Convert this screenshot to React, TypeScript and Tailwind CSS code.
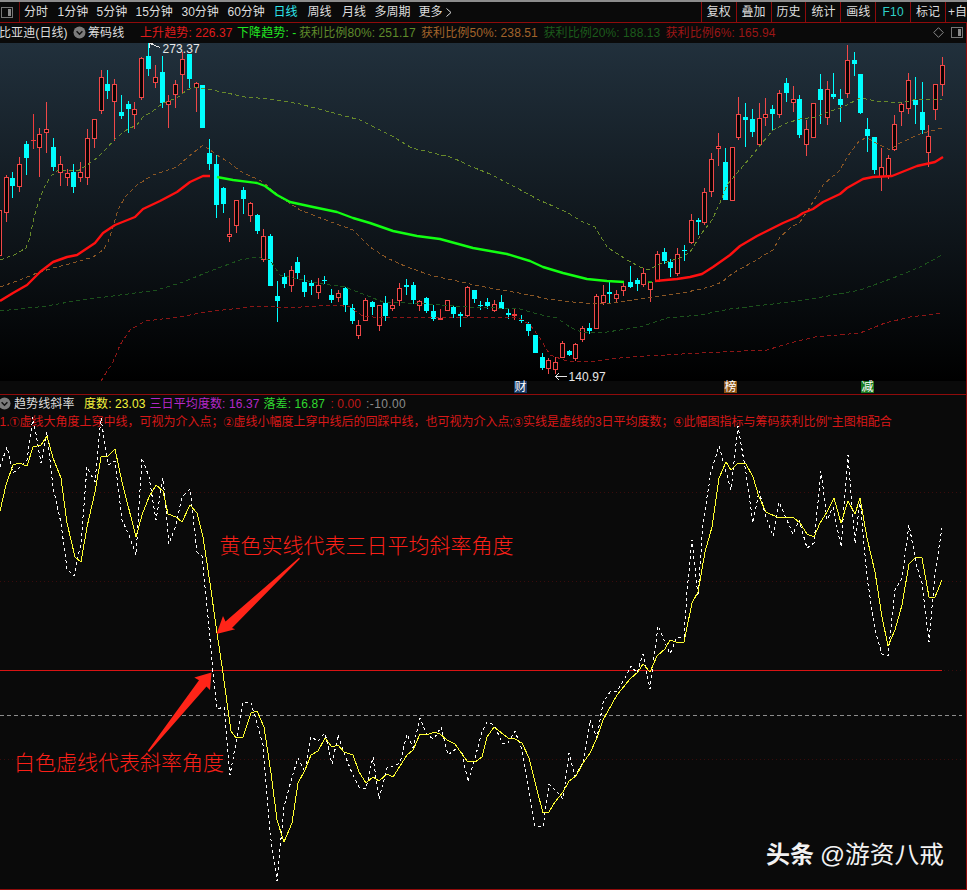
import React from "react";

type Candle = [number, number, number, number, "r" | "c" | "R"];

// [high, bodyTop, bodyBottom, low, kind]; r = hollow rise, R = solid red, c = fall
const candles: Candle[] = [
  [210, 210, 255, 255, "r"], [175, 177, 212, 221, "r"], [172, 178, 185, 197, "c"], [157, 164, 186, 191, "r"],
  [141, 144, 157, 174, "c"], [114, 140, 140, 148, "R"], [128, 134, 147, 176, "r"], [102, 129, 132, 152, "r"],
  [138, 147, 166, 170, "c"], [156, 164, 172, 185, "r"], [169, 173, 177, 185, "r"], [164, 172, 186, 192, "c"],
  [162, 172, 177, 181, "r"], [129, 138, 177, 184, "r"], [119, 119, 138, 147, "r"], [70, 77, 110, 113, "r"],
  [70, 84, 90, 98, "c"], [79, 84, 101, 140, "r"], [95, 112, 115, 118, "c"], [101, 104, 108, 132, "c"],
  [102, 109, 114, 128, "r"], [57, 58, 97, 99, "r"], [43, 56, 68, 75, "c"], [65, 77, 82, 87, "r"],
  [56, 72, 102, 107, "c"], [95, 101, 104, 127, "r"], [80, 84, 94, 107, "r"], [52, 59, 74, 93, "r"],
  [54, 54, 78, 87, "c"], [82, 83, 87, 111, "r"], [85, 85, 127, 127, "c"], [139, 153, 163, 169, "c"],
  [155, 164, 204, 217, "c"], [187, 188, 203, 212, "c"], [218, 234, 236, 241, "r"], [200, 200, 225, 232, "r"],
  [187, 190, 198, 213, "c"], [202, 203, 215, 221, "r"], [214, 215, 230, 233, "c"], [229, 236, 259, 261, "r"],
  [234, 236, 285, 285, "c"], [281, 296, 300, 321, "c"], [273, 277, 283, 287, "c"], [266, 270, 285, 291, "r"],
  [257, 262, 272, 278, "c"], [275, 282, 291, 296, "c"], [280, 283, 285, 294, "c"], [278, 285, 292, 298, "r"],
  [276, 280, 280, 283, "c"], [289, 295, 299, 302, "c"], [290, 293, 297, 301, "r"], [287, 288, 304, 311, "c"],
  [304, 308, 320, 323, "c"], [320, 325, 335, 338, "r"], [298, 300, 320, 320, "r"], [301, 302, 306, 314, "c"],
  [305, 305, 325, 330, "r"], [296, 303, 315, 320, "c"], [299, 305, 308, 310, "r"], [283, 288, 300, 305, "r"],
  [279, 285, 286, 294, "c"], [282, 285, 299, 303, "c"], [300, 301, 305, 310, "r"], [297, 298, 310, 312, "c"],
  [305, 311, 318, 320, "c"], [309, 318, 319, 319, "R"], [300, 300, 310, 310, "r"], [306, 307, 313, 317, "c"],
  [312, 314, 315, 326, "c"], [286, 287, 315, 316, "r"], [290, 290, 298, 302, "c"], [301, 305, 305, 309, "c"],
  [298, 302, 305, 308, "c"], [300, 304, 310, 311, "r"], [295, 302, 308, 308, "c"], [309, 313, 314, 318, "c"],
  [309, 314, 315, 319, "R"], [315, 320, 320, 322, "c"], [322, 324, 330, 335, "c"], [335, 335, 352, 352, "c"],
  [353, 357, 367, 369, "c"], [358, 360, 368, 373, "r"], [357, 362, 369, 373, "r"], [341, 343, 357, 357, "r"],
  [350, 351, 354, 355, "c"], [343, 344, 358, 360, "r"], [326, 328, 339, 341, "r"], [323, 328, 330, 333, "c"],
  [294, 296, 328, 328, "r"], [285, 295, 302, 304, "r"], [281, 292, 293, 302, "c"], [290, 294, 298, 301, "r"],
  [282, 286, 290, 295, "r"], [266, 282, 286, 287, "c"], [278, 280, 283, 290, "c"], [268, 273, 284, 286, "r"],
  [282, 282, 289, 301, "r"], [251, 254, 281, 281, "r"], [248, 252, 260, 263, "c"], [259, 262, 267, 276, "c"],
  [248, 254, 273, 275, "r"], [245, 250, 250, 260, "c"], [214, 220, 242, 243, "r"], [218, 220, 221, 234, "c"],
  [188, 192, 222, 224, "r"], [153, 159, 191, 196, "r"], [133, 146, 148, 165, "r"], [148, 162, 199, 199, "c"],
  [147, 147, 200, 200, "r"], [97, 114, 137, 139, "r"], [103, 117, 119, 146, "c"], [109, 119, 131, 136, "c"],
  [103, 118, 144, 146, "r"], [98, 114, 117, 125, "r"], [105, 109, 113, 130, "c"], [90, 93, 114, 117, "r"],
  [78, 83, 92, 101, "c"], [86, 99, 102, 111, "r"], [95, 99, 134, 137, "c"], [120, 129, 144, 155, "r"],
  [103, 103, 137, 137, "r"], [74, 89, 99, 123, "c"], [81, 89, 117, 124, "r"], [73, 94, 96, 98, "c"],
  [89, 99, 104, 121, "c"], [45, 60, 93, 97, "r"], [52, 60, 63, 75, "c"], [74, 74, 112, 113, "c"],
  [118, 129, 135, 151, "c"], [137, 137, 169, 173, "c"], [148, 167, 176, 190, "r"], [155, 158, 176, 178, "r"],
  [115, 124, 149, 150, "r"], [103, 104, 111, 125, "r"], [73, 80, 108, 113, "r"], [77, 100, 104, 123, "c"],
  [82, 112, 129, 133, "c"], [125, 136, 152, 166, "r"], [84, 84, 109, 119, "r"], [57, 65, 84, 95, "r"],
];

const profit80 =
  "0,260 14,255 26,248 30,237 33,222 37,207 43,190 50,177 58,170 67,170 78,171 87,165 97,158 107,148 117,137 128,129 137,125 143,117 153,111 163,103 177,98 187,90 195,87 207,89 227,93 245,97 270,99 300,104 330,112 360,120 390,135 412,148 433,153 450,157 460,161 470,166 490,174 515,187 539,200 555,207 568,213 583,222 595,227 607,247 627,260 640,267 648,270 660,264 680,258 690,252 702,233 712,220 720,203 727,185 737,173 750,158 762,143 773,130 787,123 800,119 817,117 828,112 843,107 860,98 877,101 900,103 913,100 942,99";
const profit50 =
  "0,287 20,280 37,273 53,268 73,263 93,257 103,250 108,242 112,230 118,210 125,197 137,185 153,175 177,167 188,157 203,145 217,155 230,163 240,171 263,182 280,197 300,210 323,219 353,230 370,247 387,258 407,267 433,276 453,280 470,284 490,288 530,295 547,299 573,302 593,304 613,303 647,298 673,294 687,292 710,287 722,282 733,273 753,262 773,250 780,237 790,228 800,222 810,207 823,185 840,170 847,157 860,140 867,138 880,145 890,150 900,143 920,134 942,128";
const profit20 =
  "0,311 47,306 80,300 113,296 157,290 183,282 213,270 240,260 257,257 270,260 280,275 293,278 323,284 345,287 363,294 383,302 427,304 470,307 520,309 537,314 557,318 570,327 583,333 607,332 640,327 667,318 700,315 730,309 773,304 817,298 860,290 893,278 920,267 942,255";
const profit6 =
  "101,381 113,362 120,345 130,330 145,321 180,317 205,312 250,307 270,306 283,308 337,305 350,307 358,313 363,316 373,317 420,317 470,318 517,317 530,325 540,338 550,355 567,361 590,362 620,358 647,356 700,353 767,350 790,343 815,337 860,333 885,323 910,317 942,313";
const trendUpA =
  "0,301 13,293 27,285 40,272 53,262 67,257 77,255 95,243 103,233 115,225 135,217 143,209 160,201 177,192 190,182 203,176 210,176";
const trendDown =
  "217,177 233,180 257,183 265,186 277,195 290,202 313,207 337,212 353,218 370,223 393,231 417,236 440,239 473,248 507,254 530,261 543,267 563,273 587,279 607,281 624,282";
const trendUpB =
  "655,281 677,279 690,277 702,274 713,267 730,255 740,246 757,236 773,228 783,223 797,217 803,213 813,209 823,202 840,194 847,188 863,179 873,177 892,176 907,170 917,166 935,162 943,157";

const average =
  "0,511 6,485 13,465 19,463 27,466 33,447 41,445 47,436 53,458 61,478 67,523 75,557 81,562 87,527 95,492 101,457 108,456 115,449 122,482 136,537 142,515 149,497 156,485 163,491 168,514 176,517 182,522 190,505 197,513 203,537 210,583 217,633 223,673 228,710 231,731 236,738 243,737 251,713 257,711 264,727 271,773 277,820 284,842 292,823 298,783 305,770 311,755 318,751 325,738 332,747 338,745 344,752 353,755 359,772 366,783 373,777 379,781 387,774 393,777 407,755 413,750 420,734 427,735 434,732 440,734 447,740 455,744 467,761 475,762 482,757 487,737 494,727 508,738 515,739 522,743 529,758 537,790 543,813 549,812 555,802 563,792 569,781 576,776 583,763 590,753 597,738 603,720 617,695 630,679 638,672 643,664 650,672 657,656 665,649 670,640 679,643 684,642 692,603 698,592 705,552 712,527 719,478 726,462 731,470 738,463 746,464 753,477 759,497 766,512 779,518 787,517 793,517 800,523 807,534 814,537 820,523 827,512 834,498 841,523 848,501 855,514 860,498 867,538 875,572 882,617 888,646 895,630 902,605 909,564 916,557 922,558 929,597 935,597 942,580";
const degree =
  "0,467 7,447 13,473 19,468 27,460 33,417 41,463 47,432 53,487 61,523 67,569 74,576 81,543 87,467 95,482 101,418 108,465 115,461 122,520 129,535 136,555 142,458 149,477 156,520 163,478 169,544 176,525 182,497 190,489 197,552 202,556 208,617 213,673 217,709 224,707 230,775 237,737 243,702 251,703 257,723 263,745 270,833 277,881 284,807 292,777 298,758 305,772 311,737 318,741 325,733 332,764 338,735 344,753 352,773 359,787 366,789 373,757 379,799 387,768 393,766 400,763 407,734 413,748 420,718 427,735 434,739 441,727 448,755 457,748 462,753 468,782 475,758 482,732 487,722 494,725 503,744 508,743 515,731 522,750 528,787 535,826 543,827 549,784 557,792 563,799 569,753 575,776 583,763 590,720 597,738 603,703 610,692 617,691 625,678 631,666 637,673 643,654 650,689 658,626 670,654 677,637 684,637 687,592 692,540 698,596 703,523 711,472 719,446 731,490 738,426 746,473 753,523 759,491 766,517 773,536 779,502 793,534 799,520 807,548 814,543 821,471 827,520 833,507 841,547 848,455 855,543 860,500 867,577 875,630 882,654 888,656 895,590 902,578 909,525 917,567 922,583 929,642 935,573 942,528";

const periods: [string, string][] = [
  ["分时", "w-[33.5px]"],
  ["1分钟", "w-[39px]"],
  ["5分钟", "w-[39px]"],
  ["15分钟", "w-[46px]"],
  ["30分钟", "w-[46px]"],
  ["60分钟", "w-[46px]"],
  ["日线", "w-[34px] text-[#2ee6ea]"],
  ["周线", "w-[34.5px]"],
  ["月线", "w-[32.5px]"],
  ["多周期", "w-[44px]"],
  ["更多", "w-[27px]"],
];

const tools = ["复权", "叠加", "历史", "统计", "画线", "F10", "标记"];

function PanelIcon({ className }: { className: string }) {
  return (
    <svg className={className} width="13" height="11" viewBox="0 0 13 11" fill="none" shapeRendering="crispEdges">
      <rect x="0.5" y="0.5" width="11" height="10" rx="1" stroke="#777" />
      <rect x="7" y="2" width="3" height="7" fill="#8a8a8a" />
    </svg>
  );
}

function CollapseDot({ className }: { className: string }) {
  return (
    <svg className={className} width="13" height="13" viewBox="0 0 13 13">
      <circle cx="6.5" cy="6.5" r="6" fill="#7c7c7c" />
      <path d="M3.6 5.2 6.5 8.2 9.4 5.2" fill="none" stroke="#111" strokeWidth="1.5" />
    </svg>
  );
}

function Toolbar() {
  return (
    <div className="flex h-[23px] shrink-0 items-center border-t-2 border-b border-t-[#8c8c8c] border-b-[#8f0b0b] text-[#dedede]">
      <div className="flex h-full w-[20px] shrink-0 items-center border-r border-[#6e0909]">
        <PanelIcon className="ml-px" />
      </div>
      <div className="flex pl-[4px]">
        {periods.map(([label, cls]) => (
          <span key={label} className={"shrink-0 " + cls}>{label}</span>
        ))}
      </div>
      <svg width="6" height="9" viewBox="0 0 6 9" fill="none" stroke="#ddd">
        <path d="M.5.5 5 4.5.5 8.5" />
      </svg>
      <div className="ml-auto flex h-full shrink-0">
        {tools.map((t) => (
          <span
            key={t}
            className={
              "flex w-[34.9px] shrink-0 items-center justify-center border-l border-[#8f0b0b] " +
              (t === "F10" ? "text-[#2ed0c8] tracking-wide" : "")
            }
          >
            {t}
          </span>
        ))}
        <span className="flex w-[22px] items-center border-l border-[#8f0b0b] pl-[2px]">+自</span>
      </div>
    </div>
  );
}

function CandleShape({ index, candle }: { index: number; candle: Candle }) {
  const [high, top, bottom, low, kind] = candle;
  const x = Math.max(Math.floor(6.785 * index - 0.75), -1);
  const h = bottom - top + 1;
  if (kind === "r") {
    return (
      <g>
        {top > high && <rect x={x} y={high} width="1" height={top - high} fill="#f04848" />}
        {low > bottom && <rect x={x} y={bottom + 1} width="1" height={low - bottom} fill="#f04848" />}
        <rect x={x - 2} y={top} width="5" height={h} fill="#f04848" />
        <rect x={x - 1} y={top + 1} width="3" height={Math.max(h - 2, 1)} fill="#0b0202" />
      </g>
    );
  }
  const color = kind === "R" ? "#f03c3c" : "#00ffff";
  return (
    <g fill={color}>
      <rect x={x} y={high} width="1" height={low - high + 1} />
      <rect x={x - 2} y={top} width="5" height={h} />
    </g>
  );
}

function PriceChart() {
  return (
    <svg className="block shrink-0 overflow-visible" width="966" height="338" viewBox="0 43 966 338">
      <defs>
        <linearGradient id="sky" x1="0" y1="0" x2="0" y2="1">
          <stop offset="0" stopColor="#21303c" />
          <stop offset="1" stopColor="#000000" />
        </linearGradient>
      </defs>
      <rect x="0" y="43" width="966" height="338" fill="url(#sky)" />
      <g shapeRendering="crispEdges">
        {candles.map((c, i) => (
          <CandleShape key={i} index={i} candle={c} />
        ))}
      </g>
      <g fill="none" strokeWidth="1" strokeDasharray="4 3" shapeRendering="crispEdges">
        <polyline points={profit6} stroke="#8c1616" />
        <polyline points={profit20} stroke="#1c521c" />
        <polyline points={profit50} stroke="#8a5624" />
        <polyline points={profit80} stroke="#688a2a" />
      </g>
      <g fill="none" strokeWidth="2.4" strokeLinejoin="round">
        <polyline points={trendUpA} stroke="#ff1010" />
        <polyline points={trendDown} stroke="#12ff12" />
        <path d="M648 282H652" stroke="#12d012" strokeWidth="1.5" />
        <polyline points={trendUpB} stroke="#ff1010" />
      </g>
      <g fill="none" stroke="#e4e4e4" shapeRendering="crispEdges">
        <path d="M149 48V43.5H153M150 43.5 160 47.5" />
        <path d="M555 376.5H567M559 373 555.5 376.5 559 380" />
      </g>
      <g fill="#e8e8e8" fontSize="12" letterSpacing="0.1">
        <text x="162.5" y="53">273.37</text>
        <text x="568.5" y="381">140.97</text>
      </g>
    </svg>
  );
}

function Marker({ label, className }: { label: string; className: string }) {
  return (
    <span className={"flex h-[12px] w-[13px] shrink-0 items-center justify-center leading-[12px] text-white " + className}>
      {label}
    </span>
  );
}

function Circled({ children }: { children: React.ReactNode }) {
  return <span className="inline-block w-[10px] text-[10px] leading-none font-bold">{children}</span>;
}

function SlopeChart() {
  return (
    <div className="relative h-[477px] shrink-0">
      <div className="absolute top-[1px] left-[-0.5px] leading-[18px] whitespace-nowrap text-[#d81818]">
        1.<Circled>①</Circled>虚线大角度上穿中线，可视为介入点；<Circled>②</Circled>
        虚线小幅度上穿中线后的回踩中线，也可视为介入点;<Circled>③</Circled>实线是虚线的3日平均度数；
        <Circled>④</Circled>此幅图指标与筹码获利比例"主图相配合
      </div>
      <svg className="relative block" width="966" height="477" viewBox="0 412 966 477" fill="none">
        <g stroke="#3a0c0c" strokeDasharray="1 3" shapeRendering="crispEdges">
          <path d="M0 492.5H962M0 581.5H962M0 670.5H962M0 759.5H962" />
        </g>
        <path d="M0 715.5H962" stroke="#8c8c8c" strokeDasharray="4 3" shapeRendering="crispEdges" />
        <path d="M0 670.5H942" stroke="#d81414" shapeRendering="crispEdges" />
        <polyline points={degree} stroke="#ffffff" strokeDasharray="3 3" shapeRendering="crispEdges" />
        <polyline points={average} stroke="#ffff30" shapeRendering="crispEdges" />
        <g fill="#ff2418">
          <path d="M216.5 634 223 616 225.5 621.5 299 557.8 300 558.8 232 628 235.2 629.3Z" />
          <path d="M211.5 672.5 194.3 677.5 199 680.3 147.6 751 149 752 206.5 686.5 210 690Z" />
        </g>
        <g fill="#fa2018" fontSize="21" fontWeight="300">
          <text x="219.5" y="552.5">黄色实线代表三日平均斜率角度</text>
          <text x="14" y="769.5">白色虚线代表斜率角度</text>
        </g>
        <g fill="#f2f2f2" fontSize="24">
          <text x="766" y="863" fontWeight="700">头条</text>
          <text x="820" y="863" textLength="124" lengthAdjust="spacingAndGlyphs">@游资八戒</text>
        </g>
      </svg>
    </div>
  );
}

export default function App() {
  return (
    <div className="flex h-[890px] w-[967px] flex-col overflow-hidden bg-[#0a0a0a] font-['Liberation_Sans','Noto_Sans_CJK_SC',sans-serif] text-[12px] leading-none whitespace-nowrap">
      <Toolbar />
      <div className="flex h-[867px] flex-col border-r border-b border-[#8f0b0b]">
        <div className="flex h-[19px] shrink-0 items-center tracking-[0.1px] text-[#dedede]">
          <span className="-ml-px w-[74px] shrink-0">比亚迪(日线)</span>
          <CollapseDot className="shrink-0" />
          <span className="ml-[2px] w-[52px] shrink-0">筹码线</span>
          <span className="w-[97px] shrink-0 text-[#e01c1c]">上升趋势: 226.37</span>
          <span className="w-[62px] shrink-0 text-[#22e622]">下降趋势: -</span>
          <span className="w-[122px] shrink-0 text-[#5f8c2a]">获利比例80%: 251.17</span>
          <span className="w-[122.5px] shrink-0 text-[#a3642a]">获利比例50%: 238.51</span>
          <span className="w-[122px] shrink-0 text-[#1c5c1c]">获利比例20%: 188.13</span>
          <span className="shrink-0 text-[#9c1616]">获利比例6%: 165.94</span>
          <svg className="ml-auto shrink-0" width="11" height="11" viewBox="0 0 11 11" fill="none" stroke="#888">
            <path d="M5.5.7 10.3 5.5 5.5 10.3.7 5.5Z" />
          </svg>
          <PanelIcon className="mr-[2px] ml-[7px] shrink-0" />
        </div>
        <div className="h-px shrink-0" />
        <PriceChart />
        <div className="flex h-[14px] shrink-0 border-b border-[#8f0b0b]">
          <Marker label="财" className="ml-[514px] bg-[#183a66]" />
          <Marker label="榜" className="ml-[197px] bg-[#8a5214]" />
          <Marker label="减" className="ml-[124px] bg-[#1a7a20]" />
        </div>
        <div className="flex h-[17px] shrink-0 items-center tracking-[0.1px] text-[#dedede]">
          <CollapseDot className="-ml-[2px] shrink-0" />
          <span className="ml-[3px] w-[70px] shrink-0">趋势线斜率</span>
          <span className="w-[65.5px] shrink-0 text-[#f4f43c]">度数: 23.03</span>
          <span className="w-[114px] shrink-0 text-[#b428c8]">三日平均度数: 16.37</span>
          <span className="w-[67px] shrink-0 text-[#30d830]">落差: 16.87</span>
          <span className="w-[35.5px] shrink-0 text-[#c01818]">: 0.00</span>
          <span className="tracking-[0.4px] text-[#8c8c8c]">:-10.00</span>
        </div>
        <SlopeChart />
      </div>
    </div>
  );
}
